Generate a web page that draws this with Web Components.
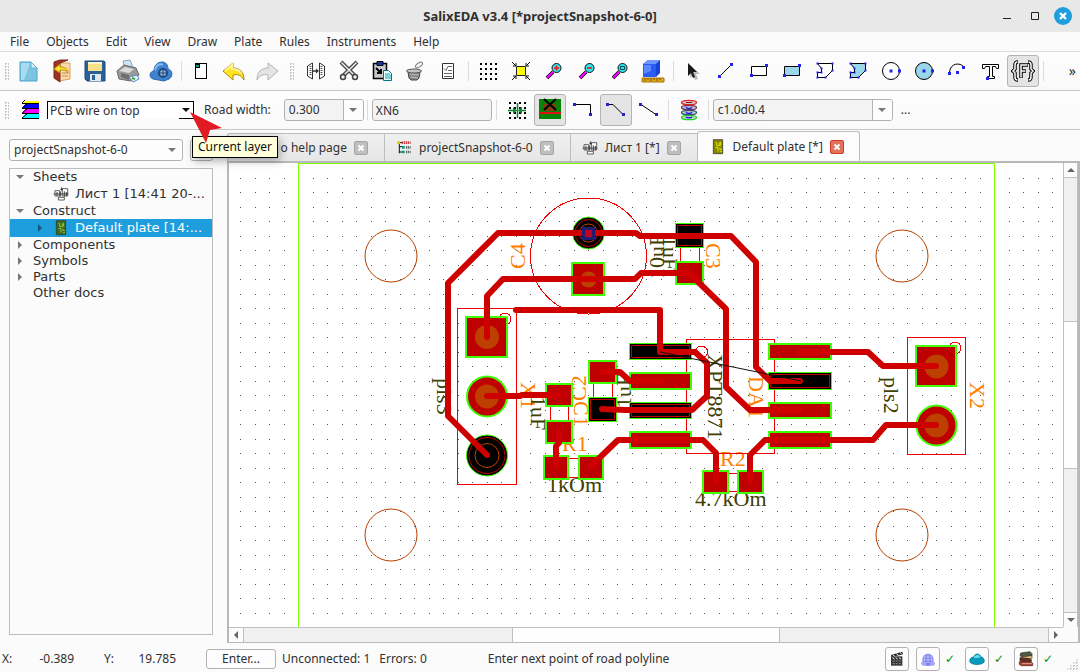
<!DOCTYPE html>
<html lang="en">
<head>
<meta charset="utf-8">
<title>SalixEDA</title>
<style>
    html, body {
        height: 100%;
        margin: 0;
    }
    body {
        background: #fbfbfb;
        color: #303030;
        font: 12px/16px "Noto Sans", "Open Sans", sans-serif;
        overflow: hidden;
    }
</style>
</head>
<body>
<eda-app></eda-app>

<script>
// ---------- icons ----------
const ICONS = {
    newDoc: `<path d="M3 3h11l6 6v13H3z" fill="#7cc4e0" stroke="#4ba3c7"/><path d="M4 4h9l-6 17H4z" fill="#a9dcef"/><path d="M14 3v6h6z" fill="#d8f1fa" stroke="#5db0d0"/>`,
    open: `<path d="M9 4h11v16l-11 2z" fill="#fbd9a8" stroke="#d9a05a"/><path d="M12 14h6M12 17h6" stroke="#c98a50"/><path d="M4 3l6-2h8l-8 3v19l-6-4z" fill="#9b3426" stroke="#7c2418"/><path d="M4 10l6-5v3c5 0 8 2 8 6-2-3-4-3-8-3v3z" fill="#ffe436" stroke="#b98b08"/>`,
    save: `<path d="M2 2h19l1 1v19H4l-2-2z" fill="#2b5f97" stroke="#1f4a7c"/><path d="M5 3h14v9H5z" fill="#fbe08a"/><path d="M5 3h14v2H5z" fill="#fff6d0"/><path d="M7 15h11v7H7z" fill="#dfe6ec"/><path d="M9 16h3v5H9z" fill="#2b5f97"/>`,
    print: `<path d="M7 2l7-1 3 7-8 2z" fill="#cfe3f7" stroke="#8ba4bd"/><path d="M1 12l7-6 12 3 3 7-8 6L3 20z" fill="#9a9a9a" stroke="#666"/><path d="M3 12l6-4 9 2-5 4z" fill="#dadada"/><path d="M5 14l8 2v5l-8-3z" fill="#6e6e6e"/><path d="M13 18l8-2 2 4-6 3z" fill="#e6f0ff" stroke="#5c86c0"/><path d="M16 19l3 1" stroke="#3aa63a" stroke-width="2"/>`,
    cloud: `<path d="M4 20c-5-2-3-8 1-8 0-6 4-9 8-9s6 3 6 7c5 1 5 8 1 10l-5 2z" fill="#3f82cf" stroke="#2c69b2"/><path d="M6 11c1-5 5-7 8-5" stroke="#8bbcf0" fill="none" stroke-width="2"/><circle cx="14" cy="14" r="4" fill="#9eb6d2" stroke="#1d4a82" stroke-width="2"/><path d="M14 9v10M9 14h10" stroke="#1d4a82"/>`,
    page: `<g shape-rendering="crispEdges"><path d="M9.5 4.5h8v15h-11v-12z" fill="#fff" stroke="#000" stroke-width="1"/><path d="M6 4h5v5H6z" fill="#000"/><path d="M7 6h3v2H7z" fill="#0a9a8a"/></g>`,
    undo: `<path d="M1 12l10-8v5c7 0 11 4 11 12-3-5-6-6-11-5v5z" fill="#ffe31f" stroke="#b08a10"/><path d="M3 12l7-6v4c4 0 7 1 9 4" fill="none" stroke="#fff59b" stroke-width="2"/>`,
    redo: `<path d="M23 12L13 4v5C6 9 2 13 2 21c3-5 6-6 11-5v5z" fill="#e4e4e4" stroke="#b4b4b4"/>`,
    mirror: `<path d="M8.500 4L3.500 7v10l5 3zM15.500 4l5 3v10l-5 3z" fill="#fff" stroke="#333"/><path d="M6.500 7v10M17.500 7v10" stroke="#555" stroke-dasharray="1 1" stroke-width="2"/><path d="M9 12h5" stroke="#333" stroke-width="1.500"/><path d="M12 9.500l3 2.500-3 2.500z" fill="#333"/>`,
    cut: `<path d="M4 3l14 14M20 3L6 17" fill="none" stroke="#444" stroke-width="4"/><path d="M4.500 3.500L18 17M19.500 3.500L6 17" fill="none" stroke="#eee" stroke-width="1.500"/><circle cx="6" cy="18" r="2.500" fill="#eee" stroke="#444" stroke-width="1.500"/><circle cx="18" cy="18" r="2.500" fill="#eee" stroke="#444" stroke-width="1.500"/>`,
    paste: `<path d="M3.500 4.500h13v15h-13z" fill="#c8c8c8" stroke="#000" stroke-width="1.500"/><path d="M7 2.500h6v4H7z" fill="#1736a8" stroke="#000"/><path d="M6 9l5 5M11 10v4H7" stroke="#000" stroke-width="2" fill="none"/><path d="M13.500 11.500h5l3 3v7h-8z" fill="#f0ffff" stroke="#078"/><path d="M15 15h5M15 17h6M15 19h6" stroke="#0aa"/>`,
    bin: `<path d="M5 13h12l-1 6-2 2H8l-2-2z" fill="#888" stroke="#444"/><ellipse cx="11" cy="12" rx="7.500" ry="2" fill="#c4c4c4" stroke="#555"/><ellipse cx="16" cy="6" rx="4" ry="2" fill="#f4f4f4" stroke="#777" transform="rotate(-35 16 6)"/><path d="M7 15l9 1M8 18l7 1" stroke="#bbb"/>`,
    list: `<path d="M6.500 4.500h11v15h-11z" fill="#fff" stroke="#333"/><path d="M12 7.500h4M12 11.500h4M8 14.500h8M8 17.500h8M8 9.500l2 2 2-4" fill="none" stroke="#666"/>`,
    grid: `<path d="M4 5h18M4 10h18M4 15h18M4 20h18" stroke="#000" stroke-width="2" stroke-dasharray="2 3" shape-rendering="crispEdges"/>`,
    fit: `<path d="M7.500 7.500h9v9h-9z" fill="#ff0" stroke="#222"/><path d="M3 3l4 4M7 4v3H4M21 3l-4 4M17 4v3h3M3 21l4-4M4 17h3v3M21 21l-4-4M20 17h-3v3" fill="none" stroke="#111"/>`,
    zoomIn: `<path d="M5 19l6-6" stroke="#000" stroke-width="3.500"/><path d="M5 19l6-6" stroke="#f0f" stroke-width="2.200"/><circle cx="14.500" cy="9" r="4.500" fill="#2ee6f0" stroke="#111"/><path d="M12 9h5M14.500 6.500v5" stroke="#f01818" stroke-width="1.600"/>`,
    zoomOut: `<path d="M5 19l6-6" stroke="#000" stroke-width="3.500"/><path d="M5 19l6-6" stroke="#f0f" stroke-width="2.200"/><circle cx="14.500" cy="9" r="4.500" fill="#2ee6f0" stroke="#111"/><path d="M12 9h5" stroke="#f01818" stroke-width="1.600"/>`,
    zoomWin: `<path d="M5 19l6-6" stroke="#000" stroke-width="3.500"/><path d="M5 19l6-6" stroke="#f0f" stroke-width="2.200"/><circle cx="14.500" cy="9" r="4.500" fill="#2ee6f0" stroke="#111"/><path d="M12.500 7.500h4v3h-4z" fill="none" stroke="#064a50"/>`,
    cube: `<path d="M1 19h22v4H1z" fill="#dba520" stroke="#a87708"/><path d="M4 19v3M7 19v2M10 19v3M13 19v2M16 19v3M19 19v2" stroke="#7c5500"/><path d="M2 5l5-4h12v13l-4 4H2z" fill="#1741d8"/><path d="M2 5l5-4h12l-4 4z" fill="#6e97ff"/><path d="M2 5h13v13H2z" fill="#2a5bf2"/><path d="M3 6h7v6l-7 3z" fill="#5b8aff"/>`,
    cursor: `<path d="M9 6v13l3-3 2 5 3-1-2-5h4z" fill="#bbb"/><path d="M7 4v13l3-3 2 5 2-1-2-5h4z" fill="#181818"/>`,
    line: `<path d="M5.500 17.500l12-12" stroke="#000"/><path d="M4 16h3v3H4zM16 4h3v3h-3z" fill="#22e"/>`,
    rect: `<path d="M4.500 7.500h15v9h-15z" fill="#fff" stroke="#000"/><path d="M3 15h3v3H3zM18 5h3v3h-3z" fill="#22e"/>`,
    rectFill: `<path d="M4.500 7.500h15v9h-15z" fill="#9bd7ea" stroke="#000"/><path d="M3 15h3v3H3zM18 5h3v3h-3z" fill="#22e"/>`,
    poly: `<path d="M4.500 4.500h15v7l-7 7h-8v-5h4v-4z" fill="#fff" stroke="#000"/><path d="M3.500 3.500h2v2h-2zM18.500 3.500h2v2h-2zM18.500 10.500h2v2h-2zM11.500 17.500h2v2h-2zM3.500 17.500h2v2h-2zM3.500 12.500h2v2h-2zM7.500 12.500h2v2h-2zM7.500 8.500h2v2h-2z" fill="#22e"/>`,
    polyFill: `<path d="M4.500 4.500h15v7l-7 7h-8v-5h4v-4z" fill="#9bd7ea" stroke="#000"/><path d="M3.500 3.500h2v2h-2zM18.500 3.500h2v2h-2zM18.500 10.500h2v2h-2zM11.500 17.500h2v2h-2zM3.500 17.500h2v2h-2zM3.500 12.500h2v2h-2zM7.500 12.500h2v2h-2zM7.500 8.500h2v2h-2z" fill="#22e"/>`,
    circle: `<circle cx="12" cy="12" r="8.500" fill="#fff" stroke="#000"/><path d="M10.500 10.500h3v3h-3zM19 10.500h3v3h-3z" fill="#22e"/>`,
    circleFill: `<circle cx="12" cy="12" r="8.500" fill="#9bd7ea" stroke="#000"/><path d="M10.500 10.500h3v3h-3zM19 10.500h3v3h-3z" fill="#22e"/>`,
    arc: `<path d="M4.500 13.500C5 4 15 3 19 8" fill="none" stroke="#000"/><path d="M3 13h3v3H3zM11 12h3v3h-3zM17 7h3v3h-3z" fill="#22e"/>`,
    text: `<path d="M4.500 5.500h16v4h-2l-1-2h-3v10h2v2h-7v-2h2v-10h-4l-1 2h-2z" fill="#fff" stroke="#000"/><path d="M8 18h3v3H8z" fill="#22e"/>`,
    param: `<g fill="none" stroke="#000" stroke-width="3.500"><path d="M7 3Q4 3 4 6v4l-2 2 2 2v4q0 3 3 3M17 3q3 0 3 3v4l2 2-2 2v4q0 3-3 3M10 19V6h7M10 12h5"/></g><g fill="none" stroke="#fff" stroke-width="1.500"><path d="M6.500 3Q4 3 4 6v4l-2 2 2 2v4q0 3 2.500 3M17.500 3Q20 3 20 6v4l2 2-2 2v4q0 3-2.500 3M10 18.500V6h6.500M10 12h4.500"/></g>`,
    layers: `<g shape-rendering="crispEdges"><path d="M6 3h14v3H3z" fill="#ff0"/><path d="M6 6h14v5H3z" fill="#00f"/><path d="M6 11h14v5H3z" fill="#f0f"/><path d="M6 16h14v5H3z" fill="#0ff"/></g><path d="M3 5.500h17M3 10.500h17M3 15.500h17M3 20.500h17M3 5l3-3M3 10l5-4M3 15l5-4M3 20l5-4" stroke="#000"/>`,
    snap: `<path d="M4 5h17M4 10h17M4 15h17M4 20h17" stroke="#000" stroke-width="2" stroke-dasharray="2 3"/><path d="M3 12.500h6M15 12.500h6M12.500 5v15" stroke="#0a8030" stroke-width="1.500"/><path d="M8 9l4 3.500L8 16zM17 9l-4 3.500 4 3.500z" fill="#0b8a36"/>`,
    drc: `<path d="M1 1h22v20H1z" fill="#078307"/><path d="M6 6h12v7H6z" fill="#8a3c12"/><path d="M1 15h22" stroke="#e01010" stroke-width="2"/><path d="M6 1l12 11M18 1L6 12" stroke="#000" stroke-width="2.200"/>`,
    route90: `<path d="M4 6.500h15.500V16" fill="none" stroke="#000"/><path d="M2 5h3v3H2zM18 15h3v3h-3z" fill="#22c"/>`,
    route45: `<path d="M3 6.500h6l10 10" fill="none" stroke="#000"/><path d="M2 5h3v3H2zM18 15h3v3h-3z" fill="#22c"/>`,
    routeAny: `<path d="M4 6.500l15 10" fill="none" stroke="#000"/><path d="M2 5h3v3H2zM18 15h3v3h-3z" fill="#22c"/>`,
    via: `<g fill="#c7cdd0" stroke-width="1.300"><ellipse cx="12" cy="19.500" rx="7.500" ry="2.200" stroke="#1fdb1f"/><ellipse cx="12" cy="14.500" rx="7.500" ry="2.200" stroke="#356"/><ellipse cx="12" cy="9.500" rx="7.500" ry="2.200" stroke="#635"/><ellipse cx="12" cy="4.500" rx="7.500" ry="2.200" stroke="#e82020"/></g><path d="M9 4.500h6" stroke="#900"/><path d="M9 9c1 2 5 2 6 0M9 14c1 2 5 2 6 0M9 19c1 1 5 1 6 0" fill="none" stroke="#22e" stroke-width="1.500"/>`,
    sheet: `<path d="M3 7h7v8H3zM14 4h8v11h-8zM8 17h9v4H8z" fill="#fff" stroke="#555" stroke-width="1.400"/><path d="M1 12h22M6 9v6M11 8v8M13 2v5M17 8v8M20 9v6M11 5h4" stroke="#333" stroke-width="1.400" fill="none"/>`,
    plate: `<path d="M5 1h14v21H5z" fill="#858500" stroke="#222"/><path d="M8 5h2v5h4V5M16 4v6M8 13h4v6M15 13v3h3M15 19h3" fill="none" stroke="#ee0" stroke-width="1.400"/>`,
    plateSel: `<path d="M5 1h14v21H5z" fill="#3b6626" stroke="#223d12"/><path d="M8 5h2v5h4V5M16 4v6M8 13h4v6M15 13v3h3M15 19h3" fill="none" stroke="#9fc62e" stroke-width="1.400"/>`,
    project: `<path d="M3 4h6M5 4v16M5 10h5M5 18h5" stroke="#111" stroke-width="1.500" fill="none"/><path d="M2 2h4v4H2z" fill="#cc0"/><path d="M9 9h4v4H9zM9 16h4v4H9z" fill="#0a9a8a"/><path d="M9 4h13" stroke="#c44" stroke-width="4" stroke-dasharray="2 1"/><path d="M15 11h7M15 18h7" stroke="#666" stroke-width="4" stroke-dasharray="2 1"/>`,
    film: `<path d="M3 8h17v14H3z" fill="#353535"/><path d="M3 6l17-5 1 4L4 9z" fill="#222"/><path d="M6 6l3 2M11 4l3 2M16 2l3 2M5 10l3 2M10 10l3 2M15 10l3 2" stroke="#eee" stroke-width="1.500"/><path d="M5 15h13M5 19h13" stroke="#aaa" stroke-dasharray="4 1"/>`,
    globe: `<path d="M1 18c3-3 19-3 22 0l-2 4H4z" fill="#a6a6ef"/><path d="M4 17C2 8 7 4 12 4s10 4 8 13z" fill="#7f86f3"/><path d="M5 9h14M4 13h16M12 4v14M8 5c-2 4-2 8-1 12M16 5c2 4 2 8 1 12" stroke="#d5d8ff" stroke-width=".8" fill="none"/><path d="M9 18h6v4H9z" fill="#7f86f3"/>`,
    drop: `<path d="M1 15c0-4 3-6 6-6 2-6 9-6 11 0 3 0 5 3 5 6 0 7-22 7-22 0z" fill="#0899bd" stroke="#056a92"/><path d="M7 10c2-5 8-5 10-1-3 2-7 2-10 1z" fill="#62e0f0"/>`,
    books: `<path d="M4 3l14-2 3 3v3l-15 2-3-2z" fill="#4d5a44" stroke="#282d22"/><path d="M6 9l15-2v4L6 13z" fill="#e8c98c" stroke="#5c3d1b"/><path d="M3 10l12 1 5 2v3H5l-2-2z" fill="#5b3425" stroke="#2c1710"/><path d="M2 16h15l5 2v4H5l-3-2z" fill="#a33c2d" stroke="#5c1d15"/><path d="M6 19h15" stroke="#f4d8c0"/>`
};

function svg(name, size = 24) {
    return `<svg width="${size}" height="${size}" viewBox="0 0 24 24" aria-hidden="true">${ICONS[name] || ''}</svg>`;
}

function attach(el, markup) {
    const template = document.createElement('template');
    template.innerHTML = markup;
    el.attachShadow({ mode: 'open' }).appendChild(template.content.cloneNode(true));
    return el.shadowRoot;
}

// ---------- small parts ----------
class EdaIcon extends HTMLElement {
    constructor() {
        super();
        attach(this, `
            <style>
                :host { display: inline-flex; flex: none; }
                svg { display: block; }
            </style>
            ${svg(this.getAttribute('name'), this.getAttribute('size') || 24)}
        `);
    }
}
customElements.define('eda-icon', EdaIcon);

class EdaTool extends HTMLElement {
    constructor() {
        super();
        attach(this, `
            <style>
                :host { display: block; flex: none; }
                button {
                    display: flex;
                    align-items: center;
                    justify-content: center;
                    width: 32px;
                    height: 32px;
                    padding: 0;
                    border: 1px solid transparent;
                    border-radius: 3px;
                    background: none;
                }
                :host([pressed]) button {
                    background: #e4e4e4;
                    border-color: #b4b4b4;
                }
            </style>
            <button type="button" aria-label="${this.getAttribute('name')}">${svg(this.getAttribute('name'))}</button>
        `);
    }
}
customElements.define('eda-tool', EdaTool);

class EdaSep extends HTMLElement {
    constructor() {
        super();
        attach(this, `
            <style>
                :host { display: flex; flex: none; width: 6px; height: 20px; justify-content: center; }
                i { width: 1px; background: #dcdcdc; }
                :host([grip]) { width: 15px; align-items: center; }
                :host([grip]) i {
                    width: 5px;
                    height: 17px;
                    background: conic-gradient(#c4c4c4 90deg, transparent 0) 0 0 / 3px 3px;
                }
            </style>
            <i></i>
        `);
    }
}
customElements.define('eda-sep', EdaSep);

// drop-down list; kind="flat" has a black edge, kind="edit" has its own arrow cell
class EdaCombo extends HTMLElement {
    constructor() {
        super();
        attach(this, `
            <style>
                :host { display: block; flex: none; }
                .box {
                    display: grid;
                    grid-template-columns: 1fr 20px;
                    box-sizing: border-box;
                    height: 22px;
                    border: 1px solid #b2b2b2;
                    border-radius: 3px;
                    background: #fdfdfd;
                    overflow: hidden;
                }
                select {
                    grid-area: 1 / 1 / 2 / 3;
                    appearance: none;
                    width: 100%;
                    border: 0;
                    padding: 0 4px;
                    background: none;
                    color: inherit;
                    font: inherit;
                }
                .arrow {
                    grid-area: 1 / 2;
                    display: flex;
                    align-items: center;
                    justify-content: center;
                    pointer-events: none;
                }
                .arrow::before {
                    content: "";
                    border: 4px solid transparent;
                    border-top: 4px solid #777;
                    border-bottom: 0;
                }
                :host([kind=edit]) .box { background: #f3f3f3; }
                :host([kind=edit]) .arrow { background: #fdfdfd; border-left: 1px solid #b2b2b2; }
                :host([kind=flat]) .box {
                    height: 18px;
                    grid-template-columns: 1fr 15px;
                    border: 0;
                    border-top: 1px solid #000;
                    border-left: 1px solid #000;
                    border-radius: 0;
                    background: #fff;
                }
                :host([kind=flat]) select { padding: 0 2px; }
                :host([kind=flat]) .arrow { border: solid #000; border-width: 0 1px 1px 0; }
                :host([kind=flat]) .arrow::before { border-top-color: #111; }
            </style>
            <div class="box">
                <select aria-label="${this.getAttribute('label')}"><option>${this.getAttribute('value')}</option></select>
                <span class="arrow"></span>
            </div>
        `);
    }
}
customElements.define('eda-combo', EdaCombo);

class EdaToolbar extends HTMLElement {
    constructor() {
        super();
        attach(this, `
            <style>
                :host {
                    display: flex;
                    align-items: center;
                    gap: 1px;
                    box-sizing: border-box;
                    height: 39px;
                    flex: none;
                    border-bottom: 1px solid #c6c6c6;
                    background: linear-gradient(#fdfdfd, #fafafa);
                    overflow: hidden;
                }
            </style>
            <slot></slot>
        `);
    }
}
customElements.define('eda-toolbar', EdaToolbar);

// ---------- title and menu ----------
class EdaTitle extends HTMLElement {
    constructor() {
        super();
        attach(this, `
            <style>
                :host {
                    display: grid;
                    grid-template-columns: 1fr auto 1fr;
                    align-items: center;
                    flex: none;
                    height: 32px;
                    background: #e8e8e8;
                    font-size: 13px;
                    font-weight: bold;
                }
                .title { grid-column: 2; }
                .buttons { display: flex; justify-content: flex-end; gap: 4px; padding-right: 5px; }
                button { width: 24px; height: 24px; padding: 0; border: 0; background: none; }
                svg { display: block; }
            </style>
            <span class="title"><slot></slot></span>
            <div class="buttons">
                <button type="button" aria-label="Minimize"><svg width="24" height="24"><path d="M8 14.500h8" stroke="#222"/></svg></button>
                <button type="button" aria-label="Maximize"><svg width="24" height="24"><path d="M8.500 8.500h7v7h-7z" fill="none" stroke="#222"/></svg></button>
                <button type="button" aria-label="Close"><svg width="24" height="24"><circle cx="12" cy="12" r="9" fill="#1f9ede"/><path d="M9 9l6 6M15 9l-6 6" stroke="#fff" stroke-width="2.400"/></svg></button>
            </div>
        `);
    }
}
customElements.define('eda-title', EdaTitle);

class EdaMenu extends HTMLElement {
    constructor() {
        super();
        const items = ['File', 'Objects', 'Edit', 'View', 'Draw', 'Plate', 'Rules', 'Instruments', 'Help'];
        attach(this, `
            <style>
                :host {
                    display: flex;
                    align-items: center;
                    gap: 17px;
                    box-sizing: border-box;
                    flex: none;
                    height: 20px;
                    padding-left: 10px;
                    border-bottom: 1px solid #dcdcdc;
                }
                button { border: 0; padding: 0; background: none; color: inherit; font: inherit; }
            </style>
            ${items.map(item => `<button type="button">${item}</button>`).join('')}
        `);
    }
}
customElements.define('eda-menu', EdaMenu);

// ---------- project tree ----------
class EdaNode extends HTMLElement {
    constructor() {
        super();
        const icon = this.getAttribute('icon');
        attach(this, `
            <style>
                :host {
                    display: flex;
                    align-items: center;
                    height: 16px;
                    padding-left: 3px;
                    white-space: nowrap;
                    overflow: hidden;
                }
                :host([icon]) { height: 18px; padding-left: 23px; }
                :host([selected]) { background: #1f9ede; color: #fff; }
                .mark { width: 14px; margin-right: 6px; display: flex; justify-content: center; flex: none; }
                .mark::before { border: 4px solid transparent; }
                :host([open]) .mark::before { content: ""; border-top: 4px solid #777; border-bottom: 0; }
                :host([closed]) .mark::before { content: ""; border-left: 4px solid #777; border-right: 0; }
                :host([selected]) .mark::before { border-left-color: #15567c; }
                eda-icon { margin-right: 6px; }
            </style>
            <span class="mark"></span>
            ${icon ? `<eda-icon name="${icon}" size="16"></eda-icon>` : ''}
            <slot></slot>
        `);
    }
}
customElements.define('eda-node', EdaNode);

class EdaSide extends HTMLElement {
    constructor() {
        super();
        attach(this, `
            <style>
                :host {
                    display: flex;
                    flex-direction: column;
                    gap: 7px;
                    flex: none;
                    width: 204px;
                    padding: 9px 14px 8px 9px;
                }
                .head { display: flex; gap: 7px; height: 22px; }
                eda-combo { flex: 1; }
                .more { width: 23px; padding: 0; border: 1px solid #b2b2b2; border-radius: 3px; background: #fdfdfd; }
                .tree {
                    flex: 1;
                    border: 1px solid #bdbdbd;
                    font: 13px/16px "DejaVu Sans", sans-serif;
                }
            </style>
            <div class="head">
                <eda-combo label="Project" value="projectSnapshot-6-0"></eda-combo>
                <button class="more" type="button" aria-label="More"></button>
            </div>
            <div class="tree">
                <eda-node open>Sheets</eda-node>
                <eda-node icon="sheet">Лист 1 [14:41 20-...</eda-node>
                <eda-node open>Construct</eda-node>
                <eda-node icon="plateSel" closed selected>Default plate [14:...</eda-node>
                <eda-node closed>Components</eda-node>
                <eda-node closed>Symbols</eda-node>
                <eda-node closed>Parts</eda-node>
                <eda-node>Other docs</eda-node>
            </div>
        `);
    }
}
customElements.define('eda-side', EdaSide);

// ---------- tabs ----------
class EdaTab extends HTMLElement {
    constructor() {
        super();
        attach(this, `
            <style>
                :host {
                    display: flex;
                    align-items: center;
                    gap: 7px;
                    box-sizing: border-box;
                    height: 28px;
                    padding: 0 16px 0 11px;
                    border: 1px solid #bdbdbd;
                    border-left-width: 0;
                    border-bottom: 0;
                    background: linear-gradient(#f0f0f0, #e6e6e6);
                    white-space: nowrap;
                }
                :host(:first-child) { border-left-width: 1px; border-radius: 3px 0 0 0; }
                :host([active]) {
                    height: 31px;
                    border-left-width: 1px;
                    margin-left: -1px;
                    margin-bottom: -1px;
                    border-radius: 3px 3px 0 0;
                    background: #fcfcfc;
                    padding: 0 15px 0 12px;
                }
                button {
                    display: flex;
                    width: 14px;
                    height: 14px;
                    padding: 0;
                    border: 1px solid #a4a4a4;
                    border-radius: 2px;
                    background: #bfbfbf;
                }
                :host([active]) button { border-color: #d03a2a; background: #e2725b; }
                svg { display: block; }
            </style>
            <eda-icon name="${this.getAttribute('icon')}" size="16"></eda-icon>
            <slot></slot>
            <button type="button" aria-label="Close tab"><svg width="12" height="12"><path d="M3.500 3.500l5 5M8.500 3.500l-5 5" stroke="#fff" stroke-width="2"/></svg></button>
        `);
    }
}
customElements.define('eda-tab', EdaTab);

// ---------- scroll bar ----------
class EdaScroll extends HTMLElement {
    constructor() {
        super();
        const up = this.hasAttribute('vertical');
        attach(this, `
            <style>
                :host { display: flex; background: #f0f0f0; box-sizing: border-box; border-top: 1px solid #c0c0c0; height: 15px; }
                :host([vertical]) { flex-direction: column; width: 15px; height: auto; border-top: 0; border-left: 1px solid #c0c0c0; border-right: 1px solid #c0c0c0; }
                .end { flex: 0 0 14px; display: flex; align-items: center; justify-content: center; background: #fcfcfc; }
                .end::before { content: ""; border: 4px solid transparent; }
                .room { flex: 269; border: 0 solid #c0c0c0; border-width: ${up ? '1px 0' : '0 1px'}; }
                .thumb { flex: 268; background: #fefefe; }
                :host([vertical]) .room { flex: 144; }
                :host([vertical]) .thumb { flex: 146; }
                .back::before { ${up ? 'border-bottom: 4px solid #666; border-top: 0' : 'border-right: 4px solid #666; border-left: 0'}; }
                .fwd::before { ${up ? 'border-top: 4px solid #666; border-bottom: 0' : 'border-left: 4px solid #666; border-right: 0'}; }
            </style>
            <span class="end back"></span><span class="room"></span><span class="thumb"></span><span class="room"></span><span class="end fwd"></span>
        `);
    }
}
customElements.define('eda-scroll', EdaScroll);

// ---------- board ----------
const TRACES = [
    '487,455 448,416 448,283 498,233 636,233 640,236 731,236 756,262 756,367 770,381 800,381',
    '487,337 487,296 503,279 635,279 641,273 689,273 726,309 726,387 750,410 800,410',
    '516,310 660,310 660,352 695,352 707,363 707,396 692,410 625,410 602,409',
    '602,372 620,372 630,381 661,381',
    '591,466 618,440 703,440 716,453 716,481',
    '750,481 750,455 765,440 873,440 886,425 936,425',
    '800,352 868,352 883,366 936,366',
    '487,396 520,396 522,395 559,395',
    '559,432 559,443 556,446 556,466'
];
// x1, y1, x2, y2, black
const PADS = [
    [571, 262, 605, 296], [465, 316, 508, 358], [915, 345, 957, 387],
    [545, 383, 573, 407], [545, 420, 573, 444],
    [588, 360, 617, 384], [588, 397, 617, 422, 1],
    [543, 455, 569, 480], [578, 455, 604, 480],
    [675, 223, 704, 248, 1], [675, 261, 704, 285],
    [702, 470, 729, 494], [737, 470, 764, 494],
    [629, 343, 692, 360, 1], [629, 372, 692, 390], [629, 402, 692, 419, 1], [629, 431, 692, 449],
    [768, 343, 832, 360], [768, 372, 832, 390, 1], [768, 402, 832, 419], [768, 431, 832, 449]
];
// text, baseline x, baseline y, angle, kind
const LABELS = [
    ['C4', 525, 269, -90], ['C3', 706, 243, 90], ['X1', 521, 382, 90], ['C2', 586, 401, -90],
    ['C1', 574, 401, 90], ['R1', 562, 451, 0], ['R2', 720, 466, 0], ['DA1', 749, 376, 90], ['X2', 970, 382, 90],
    ['pls3', 437, 378, 90, 1], ['pls2', 884, 377, 90, 1], ['1uF', 531, 396, 90, 1], ['1uF', 631, 408, -90, 1],
    ['10uF', 664, 279, -90, 1], ['1uF', 663, 236, 90, 1], ['XPT8871', 708, 354, 90, 1],
    ['1kOm', 547, 492, 0, 1], ['4.7kOm', 695, 506, 0, 1]
];

class EdaBoard extends HTMLElement {
    constructor() {
        super();
        let dots = '';
        for (let x = 240; x < 2400; x += 14.5)
            for (let y = 177.5; y < 1600; y += 14.5)
                dots += `M${Math.round(x)} ${Math.round(y)}h1v1h-1z`;

        const pads = PADS.map(([x1, y1, x2, y2, black]) => black
            ? `<path d="M${x1} ${y1}H${x2}V${y2}H${x1}z" fill="#40ff00"/><path d="M${x1 + 1} ${y1 + 1}H${x2 - 1}V${y2 - 1}H${x1 + 1}z"/><path d="M${x1 + 2.5} ${y1 + 2.5}H${x2 - 2.5}V${y2 - 2.5}H${x1 + 2.5}z" fill="none" stroke="#c00000"/>`
            : `<path d="M${x1} ${y1}H${x2}V${y2}H${x1}z" fill="#40ff00"/><path d="M${x1 + 2} ${y1 + 2}H${x2 - 2}V${y2 - 2}H${x1 + 2}z" fill="#be0000"/>`
        ).join('');

        const labels = LABELS.map(([text, x, y, angle, kind]) =>
            `<text transform="translate(${x} ${y}) rotate(${angle})" fill="${kind ? '#404000' : '#ff8000'}">${text}</text>`).join('');

        attach(this, `
            <style>
                :host { display: block; position: relative; background: #fff; overflow: hidden; }
                svg { position: absolute; width: 100%; height: 100%; }
                text { font: 22px "Liberation Serif", serif; }
                .thin { fill: none; stroke: #f00000; shape-rendering: crispEdges; }
                .hole { fill: none; stroke: #b84000; }
            </style>
            <svg role="img" aria-label="Plate">
                <g transform="translate(-229 -163)">
                    <path d="${dots}" fill="#555"/>
                    <path d="M298.500 3000V163.500H994.500V3000" fill="none" stroke="#80ff00" shape-rendering="crispEdges"/>
                    <g class="hole">
                        <circle cx="391" cy="256" r="26"/><circle cx="902" cy="256" r="26"/>
                        <circle cx="391" cy="535" r="26"/><circle cx="902" cy="535" r="26"/>
                    </g>
                    ${labels}
                    <g class="thin">
                        <circle cx="588.500" cy="256" r="58"/>
                        <path d="M457.500 308.500h59v176h-59zM907.500 337.500h58v117h-58zM686.500 339.500h88v114h-88z"/>
                        <circle cx="505" cy="319" r="6"/><circle cx="955" cy="348" r="6"/><circle cx="701.500" cy="352" r="6"/>
                        <path d="M550.500 407v14M568.500 407v14M593.500 384v14M612.500 384v14M680.500 248v14M699.500 248v14M569 458.500h9M569 477.500h9M729 473.500h9M729 491.500h9"/>
                    </g>
                    ${pads}
                    <g fill="#be0000" stroke="#40ff00" stroke-width="2">
                        <circle cx="487" cy="396.500" r="20"/><circle cx="936.500" cy="425.500" r="20"/>
                    </g>
                    <g stroke="#40ff00">
                        <circle cx="588.500" cy="233" r="16"/><circle cx="487" cy="455.500" r="20.500"/>
                    </g>
                    <g fill="#be4000">
                        <circle cx="588.500" cy="279.500" r="8"/><circle cx="487" cy="337" r="12"/><circle cx="487" cy="396.500" r="12"/>
                        <circle cx="936.500" cy="366.500" r="12"/><circle cx="936.500" cy="425.500" r="12"/>
                    </g>
                    <g fill="none" stroke="#c00000">
                        <circle cx="588.500" cy="233" r="13.500"/><circle cx="487" cy="455.500" r="18"/>
                        <circle cx="588.500" cy="233" r="9" stroke="#be4000"/><circle cx="487" cy="455.500" r="12" stroke="#be4000"/>
                    </g>
                    <g fill="none" stroke="#ce0000" stroke-width="6" stroke-linecap="round" stroke-linejoin="round">
                        ${TRACES.map(points => `<polyline points="${points}"/>`).join('')}
                    </g>
                    <rect x="583.500" y="228.500" width="10" height="10" fill="#c00020" stroke="#201c70" stroke-width="3"/>
                    <path d="M660 352L801 381" stroke="#111"/>
                </g>
            </svg>
        `);
    }
}
customElements.define('eda-board', EdaBoard);

// ---------- document area ----------
class EdaDocs extends HTMLElement {
    constructor() {
        super();
        attach(this, `
            <style>
                :host { display: flex; flex-direction: column; flex: 1; min-width: 0; }
                .tabs { display: flex; align-items: flex-end; height: 31px; flex: none; }
                .first { width: 158px; justify-content: space-between; }
                .pane {
                    flex: 1;
                    min-height: 0;
                    display: grid;
                    grid-template: 1fr 15px / 1fr 15px;
                    border: 2px double #b8b8b8;
                    border-bottom: 1px solid #b8b8b8;
                }
            </style>
            <div class="tabs">
                <eda-tab class="first" icon="page"><span style="margin-left: auto">o help page</span></eda-tab>
                <eda-tab icon="project">projectSnapshot-6-0</eda-tab>
                <eda-tab icon="sheet">Лист 1 [*]</eda-tab>
                <eda-tab icon="plate" active>Default plate [*]</eda-tab>
            </div>
            <div class="pane">
                <eda-board></eda-board>
                <eda-scroll vertical></eda-scroll>
                <eda-scroll></eda-scroll>
            </div>
        `);
    }
}
customElements.define('eda-docs', EdaDocs);

// ---------- status bar ----------
class EdaStatus extends HTMLElement {
    constructor() {
        super();
        attach(this, `
            <style>
                :host { display: flex; align-items: center; flex: none; height: 29px; padding: 2px 0 0 2px; box-sizing: border-box; }
                .coord { display: flex; justify-content: space-between; width: 72px; margin-right: 30px; }
                button {
                    height: 20px;
                    border: 1px solid #b2b2b2;
                    border-radius: 3px;
                    padding: 0;
                    background: #fdfdfd;
                    color: inherit;
                    font: inherit;
                }
                .enter { width: 70px; margin-right: 6px; }
                .errors { margin: 0 61px 0 9px; }
                .right { display: flex; align-items: center; gap: 7px; margin-left: auto; }
                .right button { display: flex; align-items: center; justify-content: center; width: 24px; height: 24px; }
                .ok { width: 12px; color: #0a8a0a; text-align: center; margin: 0 2px 0 -3px; font-family: "DejaVu Sans", sans-serif; }
                .grip {
                    align-self: flex-end;
                    width: 12px;
                    height: 12px;
                    margin: 0 2px 0 3px;
                    background: conic-gradient(#c4c4c4 90deg, transparent 0) 0 0 / 3px 3px;
                    clip-path: polygon(100% 0, 100% 100%, 0 100%);
                }
            </style>
            <span class="coord"><span>X:</span><span>-0.389</span></span>
            <span class="coord"><span>Y:</span><span>19.785</span></span>
            <button class="enter" type="button">Enter...</button>
            <span>Unconnected: 1</span>
            <span class="errors">Errors: 0</span>
            <span>Enter next point of road polyline</span>
            <span class="right">
                <button type="button" aria-label="Video"><eda-icon name="film" size="16"></eda-icon></button>
                <button type="button" aria-label="Network"><eda-icon name="globe" size="16"></eda-icon></button>
                <span class="ok">✓</span>
                <button type="button" aria-label="Cloud"><eda-icon name="drop" size="16"></eda-icon></button>
                <span class="ok">✓</span>
                <button type="button" aria-label="Library"><eda-icon name="books" size="16"></eda-icon></button>
                <span class="ok">✓</span>
                <span class="grip"></span>
            </span>
        `);
    }
}
customElements.define('eda-status', EdaStatus);

// tooltip with the big pointer, lies over the page
class EdaTip extends HTMLElement {
    constructor() {
        super();
        attach(this, `
            <style>
                :host { position: absolute; left: 192px; top: 136px; }
                .tip {
                    padding: 2px 5px;
                    border: 1px solid #000;
                    background: #ffffdc;
                    color: #111;
                    box-shadow: 2px 3px 8px rgba(0, 0, 0, .3);
                }
                svg { position: absolute; left: -3px; top: -25px; }
            </style>
            <div class="tip"><slot></slot></div>
            <svg width="36" height="34"><path d="M1 1l32 16-12 2-4 13z" fill="#e01b24"/></svg>
        `);
    }
}
customElements.define('eda-tip', EdaTip);

// ---------- whole window ----------
class EdaApp extends HTMLElement {
    constructor() {
        super();
        const tools = list => list.split(' ').map(name => {
            if (name === '|') return '<eda-sep></eda-sep>';
            if (name === '::') return '<eda-sep grip></eda-sep>';
            return name[0] === '!'
                ? `<eda-tool name="${name.slice(1)}" pressed></eda-tool>`
                : `<eda-tool name="${name}"></eda-tool>`;
        }).join('');

        attach(this, `
            <style>
                :host { display: flex; flex-direction: column; height: 100vh; position: relative; }
                .main { display: flex; flex: 1; min-height: 0; }
                .first { margin: 0 -2px 0 -1px; }
                .layer { width: 147px; margin: 0 9px 0 3px; }
                .width { width: 80px; margin-left: 12px; }
                .stack { width: 180px; margin-right: 7px; }
                eda-icon[name=layers] { margin-left: 6px; }
                .net {
                    box-sizing: border-box;
                    width: 120px;
                    height: 22px;
                    margin: 0 1px 0 0;
                    padding: 0 3px;
                    border: 1px solid #b2b2b2;
                    border-radius: 3px;
                    background: #f3f3f3;
                    color: inherit;
                    font: inherit;
                }
                .more { margin: 0 4px 0 auto; font-size: 14px; }
            </style>
            <eda-title>SalixEDA v3.4 [*projectSnapshot-6-0]</eda-title>
            <eda-menu></eda-menu>
            <eda-toolbar>
                <eda-sep grip class="first"></eda-sep>${tools('newDoc open save print cloud | page undo redo :: mirror cut paste bin list | grid fit zoomIn zoomOut zoomWin cube | cursor line rect rectFill poly polyFill circle circleFill arc text !param |')}
                <span class="more">»</span>
            </eda-toolbar>
            <eda-toolbar>
                <eda-sep grip class="first"></eda-sep>
                <eda-icon name="layers"></eda-icon>
                <eda-combo class="layer" kind="flat" label="Current layer" value="PCB wire on top"></eda-combo>
                <span>Road width:</span>
                <eda-combo class="width" kind="edit" label="Road width" value="0.300"></eda-combo>
                <eda-sep></eda-sep>
                <input class="net" aria-label="Net" value="XN6">
                <eda-sep></eda-sep>
                ${tools('snap !drc route90 !route45 routeAny | via |')}
                <eda-combo class="stack" kind="edit" label="Via" value="c1.0d0.4"></eda-combo>
                <span>...</span>
            </eda-toolbar>
            <div class="main">
                <eda-side></eda-side>
                <eda-docs></eda-docs>
            </div>
            <eda-status></eda-status>
            <eda-tip>Current layer</eda-tip>
        `);
    }
}
customElements.define('eda-app', EdaApp);
</script>
</body>
</html>
